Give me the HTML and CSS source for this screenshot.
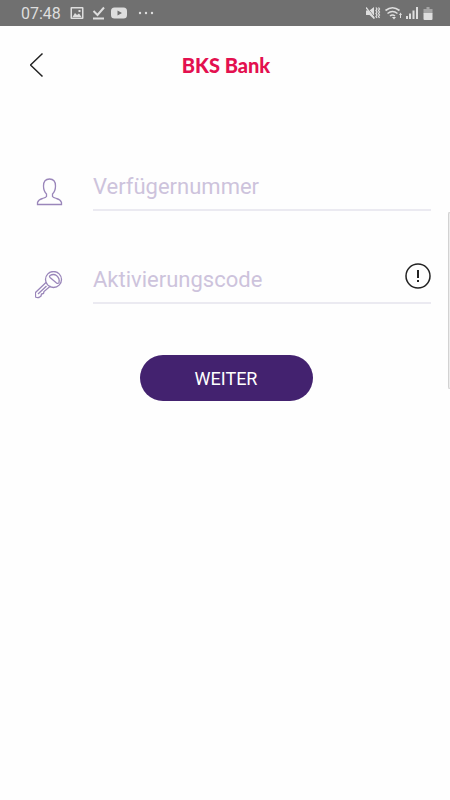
FILE: index.html
```
<!DOCTYPE html>
<html lang="de">
<head>
<meta charset="utf-8">
<meta name="viewport" content="width=device-width, initial-scale=1">
<title>BKS Bank</title>
<link rel="stylesheet" href="styles.css">
</head>
<body>
<div class="status">
  <time class="clock">07:48</time>
  <svg class="status-left" width="86" height="16" viewBox="0 0 86 16" aria-hidden="true">
    <path fill-rule="evenodd" d="M1.500 1h11q1 0 1 1v10q0 1-1 1h-11q-1 0-1-1v-10q0-1 1-1zM2 2.500v9h10v-9zM2.500 11l2.500-4 2 2 2-1.500 2.500 3.500zM8.500 4h2v2h-2z"/>
    <path d="M23.500 5l4 4 6.500-7.500" fill="none" stroke="#dedede" stroke-width="2"/>
    <path d="M23 11.500h11v2h-11z"/>
    <path fill-rule="evenodd" d="M44.500 1.500h9q3.500 0 3.500 3.500v4q0 3.500-3.500 3.500h-9q-3.500 0-3.500-3.500v-4q0-3.500 3.500-3.500zM47.500 4.500v5l4.500-2.500z"/>
    <circle cx="70" cy="7" r="1.200"/><circle cx="76" cy="7" r="1.200"/><circle cx="82" cy="7" r="1.200"/>
  </svg>
  <svg class="status-right" width="68" height="16" viewBox="0 0 68 16" aria-hidden="true">
    <path d="M0 4.500h3.500l4.500-3.500v12l-4.500-4h-3.500z"/>
    <path d="M1 1.500l8 10" stroke="#707070" stroke-width="1"/>
    <path d="M0 1.500l8.500 11" fill="none" stroke="#dedede" stroke-width="1.300"/>
    <path d="M10 1.500l1 1.500-1 1.500 1 1.500-1 1.500 1 1.500-1 1.500 1 1.500M12.500 1.500l1 1.500-1 1.500 1 1.500-1 1.500 1 1.500-1 1.500 1 1.500" fill="none" stroke="#dedede" stroke-width="1.300"/>
    <path d="M19.500 4.500q7-5.500 14 0M21.500 7.500q5-4 10 0M24 10q2.500-2 5 0" fill="none" stroke="#dedede" stroke-width="1.600"/>
    <path d="M26 11h4l-2 2.500zM33 9l1.500-2.500 1.500 2.500h-1v3h-1v-3z"/>
    <path d="M40 10h2v3h-2zM43 7.500h2v5.500h-2zM46.500 4.500h2v8.500h-2zM50 1h2v12h-2z"/>
    <path d="M57.500 3h3v-2h3v2h3v4.500h-9z" fill="#a5a5a5"/>
    <path d="M57.500 7h9v6q0 1-1 1h-7q-1 0-1-1z"/>
  </svg>
</div>

<header class="header">
  <button class="back" type="button" aria-label="Zurück">
    <svg width="14" height="26" viewBox="0 0 14 26" aria-hidden="true"><path d="M12.500 1.500l-12 11.500 12 11.500"/></svg>
  </button>
  <div class="brand">BKS Bank</div>
</header>

<main>
  <form class="form">
    <div class="row">
      <svg class="icon" width="28" height="28" viewBox="0 0 28 28" aria-hidden="true">
        <path d="M2.500 26.500v-2q1-3 5-4 3.500-1 4-2v-2.500q-3-3-3-8 0-7 6-7t6 7q0 5-3 8v2.500q.5 1 4 2 4 1 5 4v2z"/>
      </svg>
      <input class="field" id="user" type="text" aria-label="Verfügernummer" placeholder="Verfügernummer">
    </div>
    <div class="row">
      <svg class="icon" width="28" height="28" viewBox="0 0 28 28" aria-hidden="true">
        <circle cx="18.500" cy="8.500" r="8"/>
        <path d="M15 4.500q3.500-2 6.500 0 3.500 3 2.500 7-1 1.500-2.500.5l-6.500-5.500q-1-1 0-2z"/>
        <path d="M11 11.500l-10 9.500q-1 1-.5 2.500v2.500q1.500 1 3.500.5l2-1.500.5-2 2-.5.5-2 6.500-5.500M11.500 15l-8.500 8"/>
      </svg>
      <input class="field" id="code" type="text" aria-label="Aktivierungscode" placeholder="Aktivierungscode">
      <button class="info" type="button" aria-label="Hinweis">
        <svg width="26" height="26" viewBox="0 0 26 26" aria-hidden="true">
          <circle cx="13" cy="13" r="12"/>
          <path class="mark" d="M13 7v8M13 17v2"/>
        </svg>
      </button>
    </div>
    <button class="submit" type="button">WEITER</button>
  </form>
</main>
<div class="edge" aria-hidden="true"></div>
</body>
</html>
```
FILE: styles.css
```
* {
  box-sizing: border-box;
}

body {
  margin: 0;
  min-height: 100vh;
  background: #fefefe;
  font-family: Roboto, sans-serif;
}

button {
  padding: 0;
  border: 0;
  background: none;
  font: inherit;
}

svg {
  display: block;
}

.status {
  display: flex;
  align-items: center;
  height: 26px;
  padding: 2px 16px 0 21px;
  background: #707070;
  color: #dedede;
  fill: #dedede;
}

.clock {
  font-size: 16px;
  line-height: 24px;
}

.status-left {
  margin-left: 9px;
}

.status-right {
  margin-left: auto;
}

.header {
  display: grid;
  grid-template-columns: 44px 1fr 44px;
  align-items: center;
  height: 78px;
  padding: 0 28px 0 30px;
}

.back svg {
  fill: none;
  stroke: #222222;
  stroke-width: 1.5;
}

.brand {
  color: #e3104f;
  font-family: Lato, "Open Sans", sans-serif;
  font-size: 20px;
  font-weight: 900;
  text-align: center;
}

.form {
  display: flex;
  flex-direction: column;
  padding: 60px 19px 0 35px;
}

.row {
  display: flex;
  align-items: center;
  position: relative;
  height: 47px;
  margin-bottom: 46px;
}

.icon {
  flex: none;
  margin-right: 30px;
  margin-top: 8px;
  fill: none;
  stroke: #9a86ba;
  stroke-width: 1.3;
}

.field {
  flex: 1;
  min-width: 0;
  height: 47px;
  padding: 0 32px 0 0;
  border: 0;
  border-bottom: 2px solid #ebeaf1;
  border-radius: 0;
  outline: 0;
  background: transparent;
  color: #43226f;
  font: 22px Roboto, sans-serif;
}

.field::placeholder {
  color: #cdc3dc;
  opacity: 1;
}

.info {
  position: absolute;
  top: 6px;
  right: 0;
}

.info svg {
  fill: none;
  stroke: #222222;
  stroke-width: 1.5;
}

.info .mark {
  stroke-width: 2;
}

.submit {
  align-self: center;
  width: 173px;
  height: 46px;
  margin-top: 5px;
  margin-right: 14px;
  border-radius: 23px;
  background: #43226f;
  color: #ffffff;
  font-size: 18px;
}

.edge {
  position: absolute;
  top: 212px;
  right: 0;
  width: 2px;
  height: 177px;
  border: 1px solid #d2d2d2;
  border-right: 0;
  border-radius: 3px 0 0 3px;
  background: #ededed;
}
```
